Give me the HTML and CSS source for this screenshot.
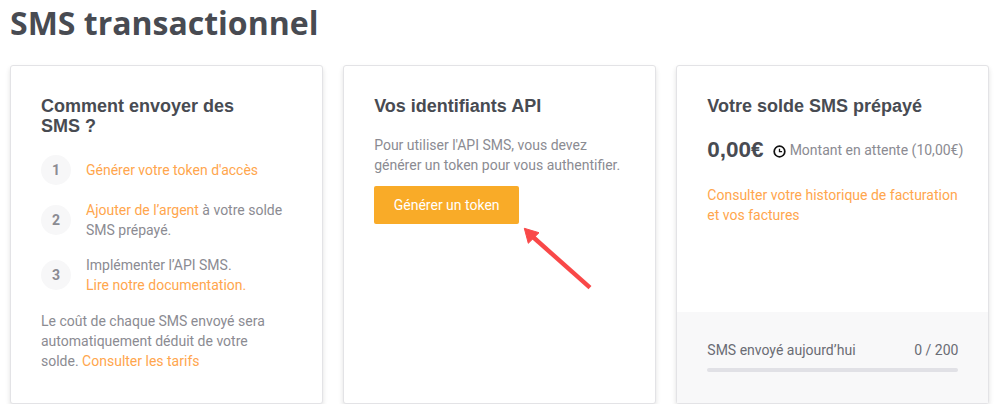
FILE: index.html
```html
<!DOCTYPE html>
<html lang="fr">
<head>
    <meta charset="UTF-8">
    <title>SMS transactionnel</title>
    <link rel="stylesheet" href="styles.css">
</head>
<body>
    <h1 class="page-title">SMS transactionnel</h1>
    <div class="cards">
        <section class="card">
            <div class="card-body">
                <h2 class="card-title">Comment envoyer des<br>SMS ?</h2>
                <ol class="steps">
                    <li class="step">
                        <span class="step-num">1</span>
                        <p><a href="#">Générer votre token d'accès</a></p>
                    </li>
                    <li class="step">
                        <span class="step-num">2</span>
                        <p><a href="#">Ajouter de l’argent</a> à votre solde SMS prépayé.</p>
                    </li>
                    <li class="step">
                        <span class="step-num">3</span>
                        <p>Implémenter l’API SMS.<br><a href="#">Lire notre documentation.</a></p>
                    </li>
                </ol>
                <p class="note">Le coût de chaque SMS envoyé sera automatiquement déduit de votre solde. <a href="#">Consulter les tarifs</a></p>
            </div>
        </section>

        <section class="card">
            <div class="card-body">
                <h2 class="card-title">Vos identifiants API</h2>
                <p class="intro">Pour utiliser l'API SMS, vous devez générer un token pour vous authentifier.</p>
                <div class="token-wrap">
                    <button class="button" type="button">Générer un token</button>
                    <!-- red annotation arrow -->
                    <svg class="arrow" width="72" height="66" viewBox="0 0 72 66">
                        <line x1="67" y1="61.7" x2="10" y2="11" stroke="#f94848" stroke-width="4.4"/>
                        <polygon points="1.3,2.3 16,6.7 5.3,17.3" fill="#f94848" stroke="#f94848"/>
                    </svg>
                </div>
            </div>
        </section>

        <section class="card">
            <div class="card-body">
                <h2 class="card-title">Votre solde SMS prépayé</h2>
                <div class="balance">
                    <span class="amount">0,00€</span>
                    <svg class="clock" width="13" height="13" viewBox="0 0 12 12">
                        <circle cx="6" cy="6" r="4.9" fill="none" stroke="#111" stroke-width="1.6"/>
                        <path d="M6 3.4V6.2H8.4" fill="none" stroke="#111" stroke-width="1.2"/>
                    </svg>
                    <span class="pending">Montant en attente (10,00€)</span>
                </div>
                <p><a href="#">Consulter votre historique de facturation et vos factures</a></p>
            </div>
            <div class="card-footer">
                <div class="usage">
                    <span>SMS envoyé aujourd’hui</span>
                    <span>0 / 200</span>
                </div>
                <div class="usage-bar"></div>
            </div>
        </section>
    </div>
</body>
</html>
```

FILE: styles.css
```css
* {
    box-sizing: border-box;
}

body {
    margin: 0;
    padding: 0 7.5px 0 10px;
    background-color: #fff;
    color: #8b8b92;
    font-family: Roboto, "Liberation Sans", sans-serif;
    font-size: 14px;
    line-height: 20px;
}

a {
    color: #ffa64d;
    text-decoration: none;
}

p {
    margin: 0;
}

.page-title {
    margin: 0;
    padding-top: 2px;
    height: 65px;
    color: #484b52;
    font-family: "Open Sans", sans-serif;
    font-size: 32px;
    font-weight: 700;
    line-height: 42px;
}

.cards {
    display: grid;
    grid-template-columns: repeat(3, minmax(0, 1fr));
    gap: 20px;
}

.card {
    display: flex;
    flex-direction: column;
    height: 339px;
    background: #fff;
    border: 1px solid #e3e3e6;
    border-radius: 3px;
    box-shadow: 0 3px 5px rgba(0, 0, 0, 0.12);
}

.card-body {
    flex: 1;
    padding: 30px 30px 0;
}

.card-title {
    margin: 0 0 19px;
    color: #484b52;
    font-family: "Liberation Sans", Arial, sans-serif;
    font-size: 18px;
    font-weight: 700;
    line-height: 20px;
}

.steps {
    margin: 0 0 16px;
    padding: 0;
    list-style: none;
}

.step {
    display: flex;
    align-items: center;
    gap: 15px;
    margin-bottom: 15px;
}

.step-num {
    display: flex;
    flex: none;
    align-items: center;
    justify-content: center;
    width: 30px;
    height: 30px;
    border-radius: 50%;
    background: #f7f7f8;
    color: #8b8b92;
    font-weight: 700;
}

.note {
    padding-right: 10px;
}

.intro {
    margin-bottom: 11px;
}

.token-wrap {
    position: relative;
}

.button {
    display: block;
    width: 145px;
    height: 38px;
    padding: 0;
    border: none;
    border-radius: 2px;
    background: #f9ab28;
    color: #fff;
    font-family: inherit;
    font-size: 14px;
}

.arrow {
    position: absolute;
    left: 149px;
    top: 40px;
}

.balance {
    display: flex;
    align-items: center;
    height: 30px;
    margin-bottom: 20px;
}

.amount {
    color: #484b52;
    font-family: "Liberation Sans", Arial, sans-serif;
    font-size: 22.5px;
    font-weight: 700;
}

.clock {
    flex: none;
    margin: 2px 4px 0 9px;
}

.pending {
    white-space: nowrap;
}

.card-footer {
    height: 91px;
    padding: 28px 30px 0;
    background: #f8f8f9;
}

.usage {
    display: flex;
    justify-content: space-between;
    color: #6a6c74;
}

.usage-bar {
    height: 4px;
    margin-top: 8px;
    border-radius: 2px;
    background: #e1e1e6;
}
```
